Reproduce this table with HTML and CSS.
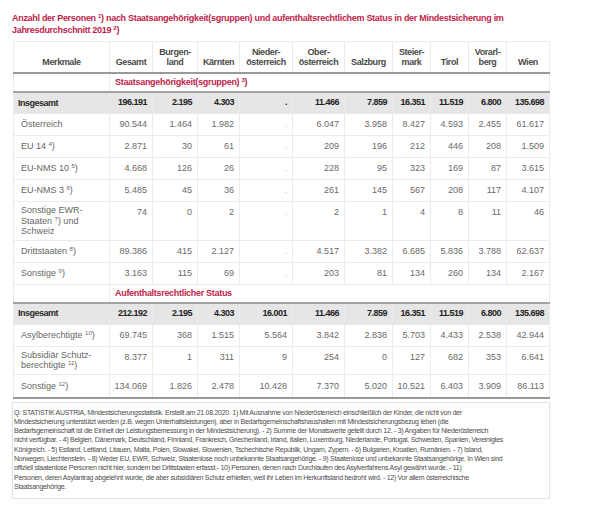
FILE: index.html
```html
<!DOCTYPE html>
<html lang="de">
<head>
<meta charset="utf-8">
<title>Mindestsicherung 2019</title>
<link rel="stylesheet" href="styles.css">
</head>
<body>
<div class="page">
  <h1 class="title">Anzahl der Personen <sup>1</sup>) nach Staatsangehörigkeit(sgruppen) und aufenthaltsrechtlichem Status in der Mindestsicherung im<br>Jahresdurchschnitt 2019 <sup>2</sup>)</h1>
  <table class="data">
    <colgroup>
      <col class="c-label"><col class="c-ges"><col class="c-bgl"><col class="c-ktn"><col class="c-noe"><col class="c-ooe"><col class="c-sbg"><col class="c-stmk"><col class="c-tir"><col class="c-vbg"><col class="c-wien">
    </colgroup>
    <thead>
      <tr>
        <th>Merkmale</th><th>Gesamt</th><th>Burgen-<br>land</th><th>Kärnten</th><th>Nieder-<br>österreich</th><th>Ober-<br>österreich</th><th>Salzburg</th><th>Steier-<br>mark</th><th>Tirol</th><th>Vorarl-<br>berg</th><th>Wien</th>
      </tr>
    </thead>
    <tbody>
      <tr class="section"><td></td><td colspan="10">Staatsangehörigkeit(sgruppen) <sup>3</sup>)</td></tr>
      <tr class="total"><td class="lbl">Insgesamt</td><td>196.191</td><td>2.195</td><td>4.303</td><td>.</td><td>11.466</td><td>7.859</td><td>16.351</td><td>11.519</td><td>6.800</td><td>135.698</td></tr>
      <tr><td class="lbl">Österreich</td><td>90.544</td><td>1.464</td><td>1.982</td><td class="na">.</td><td>6.047</td><td>3.958</td><td>8.427</td><td>4.593</td><td>2.455</td><td>61.617</td></tr>
      <tr><td class="lbl">EU 14 <sup>4</sup>)</td><td>2.871</td><td>30</td><td>61</td><td class="na">.</td><td>209</td><td>196</td><td>212</td><td>446</td><td>208</td><td>1.509</td></tr>
      <tr><td class="lbl">EU-NMS 10 <sup>5</sup>)</td><td>4.668</td><td>126</td><td>26</td><td class="na">.</td><td>228</td><td>95</td><td>323</td><td>169</td><td>87</td><td>3.615</td></tr>
      <tr><td class="lbl">EU-NMS 3 <sup>6</sup>)</td><td>5.485</td><td>45</td><td>36</td><td class="na">.</td><td>261</td><td>145</td><td>567</td><td>208</td><td>117</td><td>4.107</td></tr>
      <tr><td class="lbl">Sonstige EWR-<br>Staaten <sup>7</sup>) und<br>Schweiz</td><td>74</td><td>0</td><td>2</td><td class="na">.</td><td>2</td><td>1</td><td>4</td><td>8</td><td>11</td><td>46</td></tr>
      <tr><td class="lbl">Drittstaaten <sup>8</sup>)</td><td>89.386</td><td>415</td><td>2.127</td><td class="na">.</td><td>4.517</td><td>3.382</td><td>6.685</td><td>5.836</td><td>3.788</td><td>62.637</td></tr>
      <tr><td class="lbl">Sonstige <sup>9</sup>)</td><td>3.163</td><td>115</td><td>69</td><td class="na">.</td><td>203</td><td>81</td><td>134</td><td>260</td><td>134</td><td>2.167</td></tr>
      <tr class="section"><td></td><td colspan="10">Aufenthaltsrechtlicher Status</td></tr>
      <tr class="total"><td class="lbl">Insgesamt</td><td>212.192</td><td>2.195</td><td>4.303</td><td>16.001</td><td>11.466</td><td>7.859</td><td>16.351</td><td>11.519</td><td>6.800</td><td>135.698</td></tr>
      <tr><td class="lbl">Asylberechtigte <sup>10</sup>)</td><td>69.745</td><td>368</td><td>1.515</td><td>5.564</td><td>3.842</td><td>2.838</td><td>5.703</td><td>4.433</td><td>2.538</td><td>42.944</td></tr>
      <tr><td class="lbl">Subsidiär Schutz-<br>berechtigte <sup>11</sup>)</td><td>8.377</td><td>1</td><td>311</td><td>9</td><td>254</td><td>0</td><td>127</td><td>682</td><td>353</td><td>6.641</td></tr>
      <tr class="last"><td class="lbl">Sonstige <sup>12</sup>)</td><td>134.069</td><td>1.826</td><td>2.478</td><td>10.428</td><td>7.370</td><td>5.020</td><td>10.521</td><td>6.403</td><td>3.909</td><td>86.113</td></tr>
    </tbody>
  </table>
  <div class="notes">
    <p>Q: STATISTIK AUSTRIA, Mindestsicherungsstatistik. Erstellt am 21.08.2020. 1) Mit Ausnahme von Niederösterreich einschließlich der Kinder, die nicht von der<br>Mindestsicherung unterstützt werden (z.B. wegen Unterhaltsleistungen), aber in Bedarfsgemeinschaftshaushalten mit Mindestsicherungsbezug leben (die<br>Bedarfsgemeinschaft ist die Einheit der Leistungsbemessung in der Mindestsicherung). - 2) Summe der Monatswerte geteilt durch 12. - 3) Angaben für Niederösterreich<br>nicht verfügbar. - 4) Belgien, Dänemark, Deutschland, Finnland, Frankreich, Griechenland, Irland, Italien, Luxemburg, Niederlande, Portugal, Schweden, Spanien, Vereinigtes<br>Königreich. - 5) Estland, Lettland, Litauen, Malta, Polen, Slowakei, Slowenien, Tschechische Republik, Ungarn, Zypern. - 6) Bulgarien, Kroatien, Rumänien. - 7) Island,<br>Norwegen, Liechtenstein. - 8) Weder EU, EWR, Schweiz, Staatenlose noch unbekannte Staatsangehörige. - 9) Staatenlose und unbekannte Staatsangehörige. In Wien sind<br>offiziell staatenlose Personen nicht hier, sondern bei Drittstaaten erfasst.- 10) Personen, denen nach Durchlaufen des Asylverfahrens Asyl gewährt wurde. - 11)<br>Personen, deren Asylantrag abgelehnt wurde, die aber subsidiären Schutz erhielten, weil ihr Leben im Herkunftsland bedroht wird. - 12) Vor allem österreichische<br>Staatsangehörige.</p>
  </div>
</div>
</body>
</html>
```
FILE: styles.css
```css
html, body {
  margin: 0;
  padding: 0;
  background: #ffffff;
}

body {
  font-family: "Liberation Sans", Arial, sans-serif;
  color: #555555;
}

.page {
  padding: 12px 0 0 12px;
  width: 538px;
}

.title {
  margin: 0 0 5px 0;
  font-size: 9px;
  line-height: 12px;
  font-weight: bold;
  color: #bf1d4b;
  letter-spacing: -0.3px;
  white-space: nowrap;
}

sup {
  font-size: 6px;
  line-height: 0;
  vertical-align: 3px;
}

.data {
  margin-left: 1px;
  width: 536px;
  table-layout: fixed;
  border-collapse: collapse;
  font-size: 9px;
}

.c-label { width: 96px; }
.c-ges { width: 43px; }
.c-bgl { width: 45px; }
.c-ktn { width: 42px; }
.c-noe { width: 53px; }
.c-ooe { width: 52px; }
.c-sbg { width: 48px; }
.c-stmk { width: 38px; }
.c-tir { width: 38px; }
.c-vbg { width: 38px; }
.c-wien { width: 43px; }

.data th {
  border: 1px solid #ebebeb;
  border-bottom: 2px solid #9a9a9a;
  padding: 5px 2px 5px;
  line-height: 10px;
  vertical-align: bottom;
  text-align: center;
  font-weight: bold;
  color: #4a4a4a;
  letter-spacing: -0.4px;
}

.data td {
  border: 1px solid #ebebeb;
  padding: 5px 5px 5px 2px;
  line-height: 11px;
  vertical-align: top;
  text-align: right;
  color: #6a6a6a;
  white-space: nowrap;
}

.data td.lbl {
  text-align: left;
  vertical-align: middle;
  padding: 3px 4px 3px 7px;
  line-height: 10.5px;
  color: #666666;
}

.data td.na {
  color: #bdbdbd;
}

.section td {
  padding: 3px 5px 3px;
  text-align: left;
  vertical-align: middle;
  color: #bf1d4b;
  font-weight: bold;
  letter-spacing: -0.3px;
}

.total td {
  background: #e6e6e6;
  border-top: 2px solid #a3a3a3;
  color: #222222;
  font-weight: bold;
  letter-spacing: -0.5px;
  padding-top: 4px;
  padding-bottom: 5px;
}

.total td.lbl {
  padding-left: 4px;
  color: #2a2a2a;
}

.last td {
  border-bottom: 2px solid #9a9a9a;
  padding-top: 6px;
}

.last td.lbl {
  padding-top: 4px;
}

.notes {
  margin-top: 3px;
  border: 1px solid #e4e4e4;
  box-shadow: 0 1px 2px rgba(0, 0, 0, 0.08);
  padding: 5px 0 7px 1px;
}

.notes p {
  margin: 0;
  font-size: 7px;
  line-height: 9.3px;
  color: #4d4d4d;
  letter-spacing: -0.28px;
  white-space: nowrap;
}
```
